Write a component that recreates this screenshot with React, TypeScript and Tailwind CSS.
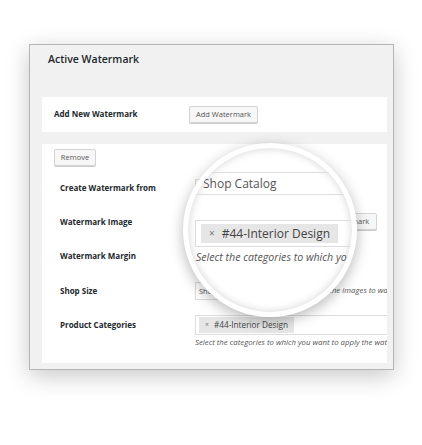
import React from "react";

const font = { fontFamily: '"Open Sans", "Liberation Sans", sans-serif' };

function Label({ children }: { children: React.ReactNode }) {
  return <div className="w-[135px] shrink-0 text-[8px] font-bold text-[#23282d]">{children}</div>;
}

function Btn({ children, className = "" }: { children: React.ReactNode; className?: string }) {
  return (
    <div
      className={
        "flex items-center justify-center rounded-[2px] border border-[#d4d4d4] bg-[#f7f7f7] text-[7.5px] text-[#555] shadow-[0_1px_0_#ccc] " +
        className
      }
    >
      {children}
    </div>
  );
}

export default function App() {
  return (
    <div className="relative h-[445px] w-[422px] overflow-hidden bg-white" style={font}>
      <div className="pl-[29px] pt-[44px]">
        <div className="flex h-[326px] w-[365px] flex-col border border-[#b5b5b5] bg-[#f1f1f1] shadow-[0_6px_22px_rgba(0,0,0,0.22)]">
          <div className="pl-[18px] pt-[7px] text-[10.5px] font-semibold text-[#23282d]">Active Watermark</div>
          <div className="ml-[12px] mr-[6px] mt-[29px] flex h-[35px] items-center bg-white pl-[12px]">
            <Label>Add New Watermark</Label>
            <Btn className="h-[17px] w-[69px]">Add Watermark</Btn>
          </div>
          <div className="ml-[12px] mr-[6px] mt-[12px] h-[219px] overflow-hidden bg-white">
            <Btn className="ml-[12px] mt-[5px] h-[17px] w-[42px]">Remove</Btn>
            <div className="flex flex-col pl-[18px]">
              <div className="mt-[12px] flex h-[20px] items-center">
                <Label>Create Watermark from</Label>
                <div className="h-[18px] w-[120px] border border-[#ddd] pl-[4px] text-[8px] leading-[16px] text-[#555]">Shop Catalog</div>
              </div>
              <div className="mt-[14px] flex h-[20px] items-center">
                <Label>Watermark Image</Label>
                <div className="h-[18px] w-[95px] border border-[#ddd]" />
                <Btn className="ml-[5px] h-[17px] w-[82px]">Upload Watermark</Btn>
              </div>
              <div className="mt-[14px] flex h-[20px] items-center">
                <Label>Watermark Margin</Label>
                <div className="h-[18px] w-[60px] border border-[#ddd]" />
              </div>
              <div className="mt-[15px] flex h-[20px] items-center">
                <Label>Shop Size</Label>
                <div className="h-[18px] w-[70px] shrink-0 border border-[#ddd] pl-[3px] text-[7.5px] leading-[16px] text-[#555]">Shop Size</div>
                <div className="ml-[6px] whitespace-nowrap text-[7.8px] italic text-[#555]">Select the size of the images to watermark</div>
              </div>
              <div className="mt-[14px] flex items-start">
                <div className="flex h-[20px] items-center">
                  <Label>Product Categories</Label>
                </div>
                <div className="flex flex-col">
                  <div className="flex h-[20px] w-[200px] items-center border border-[#ddd] pl-[3px]">
                    <div className="flex h-[16px] items-center gap-[5px] bg-[#e6e6e6] px-[6px] text-[8.2px] text-[#444]">
                      <span className="text-[7px] text-[#777]">×</span>
                      <span>#44-Interior Design</span>
                    </div>
                  </div>
                  <div className="mt-[2px] whitespace-nowrap text-[7.8px] italic text-[#555]">Select the categories to which you want to apply the watermark</div>
                </div>
              </div>
            </div>
          </div>
        </div>
      </div>

      {/* magnifier */}
      <div className="absolute left-[183px] top-[143px] h-[174px] w-[174px] overflow-hidden rounded-full border-[5px] border-white bg-white shadow-[0_4px_14px_rgba(0,0,0,0.28),inset_0_0_8px_rgba(0,0,0,0.18)]">
        <div className="absolute left-[7px] top-[24px] h-[23px] w-[220px] border border-[#ddd] pl-[7px] text-[12px] leading-[21px] text-[#555]">
          Shop Catalog
        </div>
        <div className="absolute left-[7px] top-[72px] flex h-[27px] w-[220px] items-center border border-[#ddd] pl-[5px]">
          <div className="flex h-[19px] items-center gap-[7px] bg-[#e6e6e6] px-[8px] text-[12px] text-[#444]">
            <span className="text-[10px] text-[#777]">×</span>
            <span>#44-Interior Design</span>
          </div>
        </div>
        <div className="absolute left-[8px] top-[102px] whitespace-nowrap text-[10.6px] italic text-[#555]">
          Select the categories to which you want to apply
        </div>
      </div>
    </div>
  );
}
